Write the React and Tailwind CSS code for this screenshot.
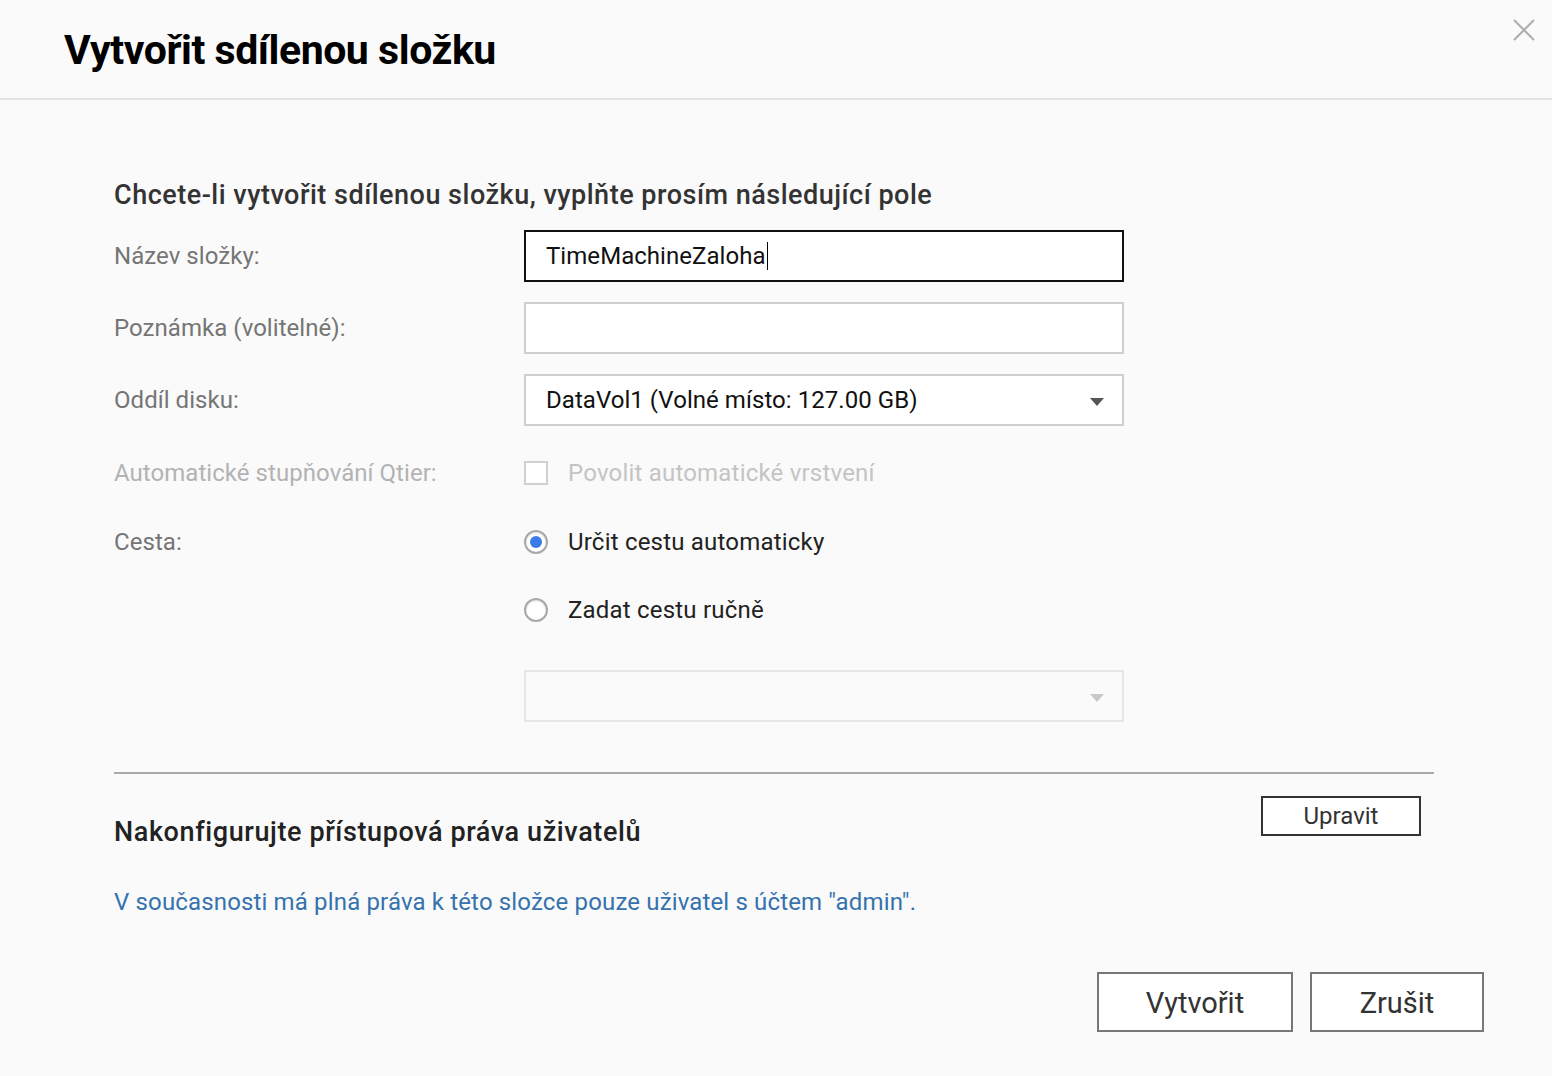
import React from "react";

const font = { fontFamily: "Roboto, 'Noto Sans', sans-serif" };

function Row({ label, labelClass = "text-[#757575]", children, className = "" }) {
  return (
    <div className={`flex items-center h-[52px] ${className}`}>
      <div className={`w-[410px] text-[24px] tracking-[0.05px] ${labelClass}`}>{label}</div>
      <div className="flex-1 flex items-center">{children}</div>
    </div>
  );
}

function Arrow({ color }) {
  return (
    <svg width="16" height="10" viewBox="0 0 16 10" className="absolute right-[17px] top-[21px]">
      <path d="M1 1 L15 1 L8 9 Z" fill={color} />
    </svg>
  );
}

export default function App() {
  return (
    <div className="w-[1552px] h-[1076px] bg-[#fafafa] relative overflow-hidden" style={font}>
      <div className="h-[100px] border-b-2 border-[#e2e2e2] flex items-center pl-[64px]">
        <h1 className="text-[41px] font-bold text-black tracking-[-0.45px] leading-none mt-[2px]">Vytvořit sdílenou složku</h1>
      </div>
      <svg className="absolute left-[1512px] top-[18px]" width="24" height="24" viewBox="0 0 24 24">
        <path d="M2 2 L22 22 M22 2 L2 22" stroke="#b0b0b0" strokeWidth="2.2" />
      </svg>

      <div className="pl-[114px] pr-[118px]">
        <div className="mt-[77px] h-[36px] flex items-center text-[27px] font-medium text-[#333] tracking-[0.5px]">
          Chcete-li vytvořit sdílenou složku, vyplňte prosím následující pole
        </div>

        <Row label="Název složky:" className="mt-[17px]">
          <div className="w-[600px] h-[52px] border-2 border-[#111] bg-white flex items-center pl-[20px] text-[24px] text-[#111] tracking-[0.05px]">
            TimeMachineZaloha<span className="inline-block w-[1.5px] h-[28px] bg-black ml-[1px]"></span>
          </div>
        </Row>
        <Row label="Poznámka (volitelné):" className="mt-[20px]">
          <div className="w-[600px] h-[52px] border-2 border-[#cfcfcf] bg-white"></div>
        </Row>
        <Row label="Oddíl disku:" className="mt-[20px]">
          <div className="relative w-[600px] h-[52px] border-2 border-[#cfcfcf] bg-white flex items-center pl-[20px] text-[24px] text-[#111] tracking-[0.05px]">
            DataVol1 (Volné místo: 127.00 GB)
            <Arrow color="#555" />
          </div>
        </Row>
        <Row label="Automatické stupňování Qtier:" labelClass="text-[#b3b3b3]" className="mt-[21px]">
          <div className="w-[24px] h-[24px] border-2 border-[#d0d0d0] bg-white"></div>
          <span className="ml-[20px] text-[24px] text-[#c4c4c4] tracking-[0.2px]">Povolit automatické vrstvení</span>
        </Row>
        <Row label="Cesta:" className="mt-[17px]">
          <div className="w-[24px] h-[24px] rounded-full border-2 border-[#a8a8a8] bg-white flex items-center justify-center shadow-[inset_0_1px_2px_rgba(0,0,0,0.15)]">
            <div className="w-[12px] h-[12px] rounded-full bg-[#3b7be8]"></div>
          </div>
          <span className="ml-[20px] text-[24px] text-[#222] tracking-[0.2px]">Určit cestu automaticky</span>
        </Row>
        <Row label="" className="mt-[16px]">
          <div className="w-[24px] h-[24px] rounded-full border-2 border-[#a8a8a8] bg-white shadow-[inset_0_1px_2px_rgba(0,0,0,0.15)]"></div>
          <span className="ml-[20px] text-[24px] text-[#222] tracking-[0.2px]">Zadat cestu ručně</span>
        </Row>
        <Row label="" className="mt-[34px]">
          <div className="relative w-[600px] h-[52px] border-2 border-[#e6e6e6] bg-[#fafafa]">
            <Arrow color="#c8c8c8" />
          </div>
        </Row>

        <div className="mt-[50px] h-[2px] bg-[#a9a9a9] w-[1320px]"></div>

        <div className="flex w-[1307px] relative h-[72px] mt-[22px]">
          <div className="absolute left-0 top-[18px] text-[27px] font-medium text-[#222] tracking-[0.6px] leading-[36px]">
            Nakonfigurujte přístupová práva uživatelů
          </div>
          <div className="ml-auto w-[160px] h-[40px] border-2 border-[#333] bg-white flex items-center justify-center text-[24px] text-[#333]">
            Upravit
          </div>
        </div>

        <div className="mt-[18px] text-[24px] text-[#3572ae] tracking-[0.15px] leading-[32px]">
          V současnosti má plná práva k této složce pouze uživatel s účtem "admin".
        </div>

        <div className="flex justify-end gap-[17px] mt-[54px] w-[1370px]">
          <div className="w-[196px] h-[60px] border-2 border-[#777] bg-white flex items-center justify-center pt-[3px] text-[29px] text-[#333]">Vytvořit</div>
          <div className="w-[174px] h-[60px] border-2 border-[#777] bg-white flex items-center justify-center pt-[3px] text-[29px] text-[#333]">Zrušit</div>
        </div>
      </div>
    </div>
  );
}
